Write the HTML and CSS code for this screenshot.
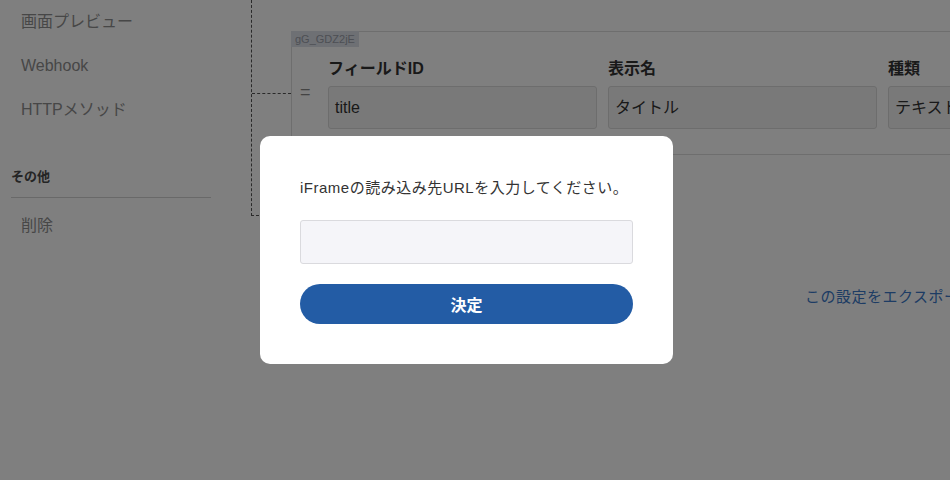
FILE: index.html
```html
<!DOCTYPE html>
<html lang="ja">

<head>
  <meta charset="UTF-8">
  <meta name="viewport" content="width=device-width, initial-scale=1.0">
  <title>iFrame設定</title>
  <link rel="stylesheet" href="styles.css">
</head>

<body>
  <div class="page">
    <aside class="sidebar">
      <ul class="menu">
        <li class="menu-item">画面プレビュー</li>
        <li class="menu-item">Webhook</li>
        <li class="menu-item">HTTPメソッド</li>
      </ul>
      <h3 class="menu-title">その他</h3>
      <ul class="menu menu-sub">
        <li class="menu-item">削除</li>
      </ul>
    </aside>
    <main class="main">
      <div class="tree">
        <div class="tree-row">
          <span class="connector"></span>
          <div class="field-card">
            <span class="field-key">gG_GDZ2jE</span>
            <span class="handle">=</span>
            <div class="field">
              <label class="field-label">フィールドID</label>
              <div class="field-input">title</div>
            </div>
            <div class="field">
              <label class="field-label">表示名</label>
              <div class="field-input">タイトル</div>
            </div>
            <div class="field">
              <label class="field-label">種類</label>
              <div class="field-input">テキストフィールド</div>
            </div>
          </div>
        </div>
      </div>
      <div class="export-row">
        <a class="export-link" href="#">この設定をエクスポートする</a>
      </div>
    </main>
  </div>

  <div class="overlay">
    <div class="modal">
      <p class="modal-text">iFrameの読み込み先URLを入力してください。</p>
      <input class="modal-input" type="text">
      <button class="modal-button">決定</button>
    </div>
  </div>
</body>

</html>
```

FILE: styles.css
```css
* {
  box-sizing: border-box;
}

body {
  margin: 0;
  width: 950px;
  height: 480px;
  overflow: hidden;
  background: #fff;
  font-family: "Liberation Sans", "Noto Sans CJK JP", sans-serif;
  color: #333;
}

.page {
  display: flex;
  height: 480px;
}

.sidebar {
  width: 251px;
  flex-shrink: 0;
  padding: 0 40px 0 11px;
}

.menu {
  list-style: none;
  margin: 0;
  padding: 0;
}

.menu-item {
  padding-left: 10px;
  height: 44px;
  line-height: 44px;
  font-size: 16px;
  color: #8e8e8e;
}

.menu-title {
  margin: 35px 0 0;
  padding-bottom: 10px;
  border-bottom: 1px solid #d2d2d2;
  font-size: 13px;
  font-weight: bold;
  line-height: 20px;
  color: #4a4a4a;
}

.menu-sub .menu-item {
  height: 56px;
  line-height: 56px;
}

.main {
  flex: 1;
  min-width: 0;
}

.tree {
  height: 216px;
  width: 420px;
  border-left: 1px dashed #555;
  border-bottom: 1px dashed #555;
  padding-top: 31px;
}

.tree-row {
  display: flex;
  align-items: center;
}

.connector {
  width: 39px;
  flex-shrink: 0;
  border-top: 1px dashed #555;
}

.field-card {
  position: relative;
  display: flex;
  align-items: flex-start;
  gap: 11px;
  flex-shrink: 0;
  height: 124px;
  padding: 26px 0 0 8px;
  border: 1px solid #dcdcdc;
  border-right: none;
}

.field-key {
  position: absolute;
  top: -1px;
  left: -1px;
  padding: 0 4px;
  height: 16px;
  line-height: 16px;
  font-size: 11px;
  color: #9a9ea8;
  background: #dde1e9;
}

.handle {
  width: 17px;
  margin-top: 24px;
  font-size: 18px;
  color: #888;
  line-height: 20px;
}

.field {
  width: 269px;
  flex-shrink: 0;
}

.field-label {
  display: block;
  font-size: 16px;
  font-weight: bold;
  line-height: 22px;
  color: #333;
  margin-bottom: 6px;
}

.field-input {
  height: 43px;
  padding: 0 6px;
  line-height: 41px;
  font-size: 16px;
  color: #333;
  background: #f3f3f3;
  border: 1px solid #dadada;
  border-radius: 3px;
  white-space: nowrap;
  overflow: hidden;
}

.export-row {
  padding: 69px 0 0 554px;
}

.export-link {
  font-size: 15px;
  color: #3b78c8;
  text-decoration: none;
  white-space: nowrap;
  letter-spacing: 0.5px;
}

.overlay {
  position: fixed;
  inset: 0;
  display: flex;
  align-items: center;
  justify-content: center;
  padding: 20px 17px 0 0;
  background: rgba(0, 0, 0, 0.5);
}

.modal {
  width: 413px;
  padding: 40px;
  background: #fff;
  border-radius: 10px;
}

.modal-text {
  margin: 0 0 20px;
  font-size: 15px;
  letter-spacing: 0.5px;
  line-height: 24px;
  white-space: nowrap;
  color: #333;
}

.modal-input {
  display: block;
  width: 100%;
  height: 44px;
  margin: 0 0 20px;
  background: #f5f5f9;
  border: 1px solid #dadade;
  border-radius: 3px;
}

.modal-button {
  display: block;
  width: 100%;
  height: 40px;
  border: none;
  border-radius: 20px;
  background: #235ca5;
  color: #fff;
  font-family: inherit;
  font-size: 16px;
  font-weight: bold;
}
```
